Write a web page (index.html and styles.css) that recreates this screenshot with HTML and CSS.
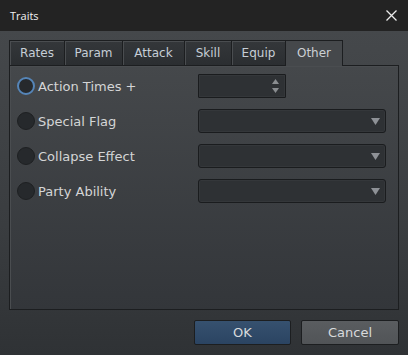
FILE: index.html
```html
<!DOCTYPE html>
<html>
<head>
<meta charset="utf-8">
<link rel="stylesheet" href="styles.css">
</head>
<body>
<div class="window">
  <div class="titlebar">
    <span class="title">Traits</span>
    <svg class="close" width="11" height="11" viewBox="0 0 11 11"><path d="M0.5 0.5L10.5 10.5M10.5 0.5L0.5 10.5" stroke="#ececec" stroke-width="1.3" fill="none"/></svg>
  </div>
  <div class="content">
    <div class="tabs">
      <div class="tab">Rates</div>
      <div class="tab">Param</div>
      <div class="tab">Attack</div>
      <div class="tab">Skill</div>
      <div class="tab">Equip</div>
      <div class="tab active">Other</div>
    </div>
    <div class="panel">
      <div class="row">
        <span class="radio focus"></span>
        <span class="label">Action Times +</span>
        <div class="spin">
          <span class="spin-arrows">
            <svg width="7" height="5" viewBox="0 0 7 5"><path d="M3.5 0L7 5H0Z" fill="#8a8d90"/></svg>
            <svg width="7" height="5" viewBox="0 0 7 5"><path d="M0 0H7L3.5 5Z" fill="#8a8d90"/></svg>
          </span>
        </div>
      </div>
      <div class="row">
        <span class="radio"></span>
        <span class="label">Special Flag</span>
        <div class="combo"><svg width="9" height="7" viewBox="0 0 9 7"><path d="M0 0H9L4.5 7Z" fill="#8e9196"/></svg></div>
      </div>
      <div class="row">
        <span class="radio"></span>
        <span class="label">Collapse Effect</span>
        <div class="combo"><svg width="9" height="7" viewBox="0 0 9 7"><path d="M0 0H9L4.5 7Z" fill="#8e9196"/></svg></div>
      </div>
      <div class="row">
        <span class="radio"></span>
        <span class="label">Party Ability</span>
        <div class="combo"><svg width="9" height="7" viewBox="0 0 9 7"><path d="M0 0H9L4.5 7Z" fill="#8e9196"/></svg></div>
      </div>
    </div>
    <div class="buttons">
      <button class="btn ok">OK</button>
      <button class="btn cancel">Cancel</button>
    </div>
  </div>
</div>
</body>
</html>
```
FILE: styles.css
```css
html, body {
  margin: 0;
  padding: 0;
  background: #2f3235;
}
.window {
  width: 408px;
  height: 355px;
  display: flex;
  flex-direction: column;
  font-family: "DejaVu Sans", sans-serif;
  overflow: hidden;
}
.titlebar {
  height: 31px;
  flex: none;
  background: #232323;
  display: flex;
  align-items: center;
  justify-content: space-between;
  padding: 0 11px 1px 10px;
  box-sizing: border-box;
}
.title {
  color: #f2f2f2;
  font-family: "Open Sans", sans-serif;
  font-size: 11px;
}
.close {
  display: block;
}
.content {
  flex: 1;
  background: linear-gradient(#45484b, #3a3d40 60%, #2f3235);
  padding: 9px 9px 0 9px;
  display: flex;
  flex-direction: column;
}
.tabs {
  display: flex;
  height: 25px;
  position: relative;
  z-index: 1;
}
.tab {
  box-sizing: border-box;
  height: 25px;
  border: 1px solid #1c1e20;
  border-bottom: none;
  background: linear-gradient(#34373a, #2b2e31);
  box-shadow: inset 1px 1px 0 #4a4d50;
  color: #c6ced6;
  font-size: 12px;
  padding: 0;
  display: flex;
  align-items: center;
  justify-content: center;
  margin-left: -1px;
}
.tab:first-child { margin-left: 0; width: 56px; }
.tab:nth-child(2) { width: 59px; }
.tab:nth-child(3) { width: 63px; }
.tab:nth-child(4) { width: 48px; }
.tab:nth-child(5) { width: 55px; }
.tab.active {
  width: 58px;
  background: #45484b;
  box-shadow: none;
  height: 26px;
  padding-bottom: 1px;
  color: #cbd0d5;
}
.panel {
  box-sizing: border-box;
  height: 245px;
  border: 1px solid #1c1e20;
  box-shadow: inset 1px 1px 0 #4a4d50;
  background: linear-gradient(#45484b, #33363a);
  padding: 8px 0 0 7px;
  display: flex;
  flex-direction: column;
  gap: 11px;
}
.row {
  display: flex;
  align-items: center;
  height: 24px;
}
.radio {
  box-sizing: border-box;
  width: 18px;
  height: 18px;
  border-radius: 50%;
  background: #26292c;
  border: 1px solid #1e2022;
  flex: none;
}
.radio.focus {
  border: 2px solid #5585b8;
}
.label {
  color: #d4d5d6;
  font-size: 13px;
  width: 163px;
  padding-left: 3px;
  box-sizing: border-box;
  white-space: nowrap;
}
.spin, .combo {
  box-sizing: border-box;
  height: 24px;
  border: 1px solid #1a1c1e;
  background: #2e3134;
  box-shadow: inset 0 0 0 1px #34373a;
  display: flex;
  align-items: center;
  justify-content: flex-end;
}
.spin {
  width: 88px;
  border-radius: 1px;
  padding-right: 6px;
}
.spin-arrows {
  display: flex;
  flex-direction: column;
  gap: 4px;
}
.spin-arrows svg { display: block; }
.combo {
  width: 188px;
  border-radius: 3px;
  padding-right: 5px;
}
.combo svg { display: block; }
.buttons {
  display: flex;
  justify-content: flex-end;
  gap: 10px;
  margin-top: 10px;
}
.btn {
  box-sizing: border-box;
  width: 98px;
  height: 25px;
  border: 1px solid #1c1e20;
  border-radius: 2px;
  font-family: "DejaVu Sans", sans-serif;
  font-size: 13px;
  color: #d8dadc;
  padding: 0;
}
.btn.ok {
  background: linear-gradient(#36516f, #2b4462);
  width: 97px;
}
.btn.cancel {
  background: linear-gradient(#5a5d60, #515457);
}
```
